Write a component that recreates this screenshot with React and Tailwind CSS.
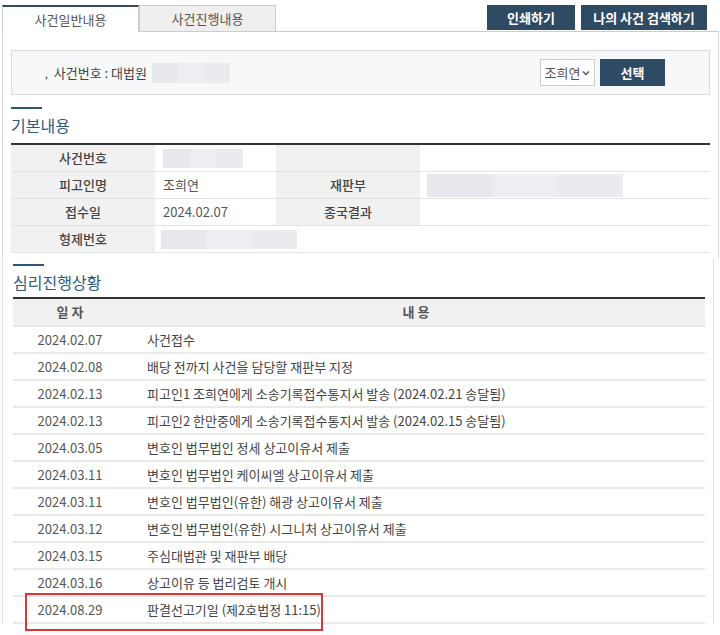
import React from 'react'

const font = { fontFamily: '"Noto Sans CJK KR", "Noto Sans", sans-serif' }

const rows = [
  ['2024.02.07', '사건접수'],
  ['2024.02.08', '배당 전까지 사건을 담당할 재판부 지정'],
  ['2024.02.13', '피고인1 조희연에게 소송기록접수통지서 발송 (2024.02.21 송달됨)'],
  ['2024.02.13', '피고인2 한만중에게 소송기록접수통지서 발송 (2024.02.15 송달됨)'],
  ['2024.03.05', '변호인 법무법인 정세 상고이유서 제출'],
  ['2024.03.11', '변호인 법무법인 케이씨엘 상고이유서 제출'],
  ['2024.03.11', '변호인 법무법인(유한) 해광 상고이유서 제출'],
  ['2024.03.12', '변호인 법무법인(유한) 시그니처 상고이유서 제출'],
  ['2024.03.15', '주심대법관 및 재판부 배당'],
  ['2024.03.16', '상고이유 등 법리검토 개시'],
]

function Blur({ className }) {
  return (
    <div className={'flex h-[19px] ' + className}>
      <div className="flex-1 bg-[#e6e8ec]" />
      <div className="flex-1 bg-[#eceef1]" />
      <div className="flex-1 bg-[#e9ebee]" />
    </div>
  )
}

function SectionTitle({ children }) {
  return (
    <div>
      <div className="w-[31px] h-[2px] bg-[#2f5578]" />
      <div className="text-[16px] leading-[20px] text-[#2e5a82] mt-[6px]">{children}</div>
    </div>
  )
}

export default function App() {
  return (
    <div className="w-[720px] h-[635px] overflow-hidden bg-white text-[13px] text-[#444]" style={font}>
      {/* top screenshot part */}
      <div className="pl-[2px] pr-[1px]">
        <div className="flex pt-[5px]">
          <div className="w-[137px] h-[27px] bg-white border-t-2 border-[#2f4a63] border-x border-x-[#ccc] flex items-center justify-center text-[#555]">
            사건일반내용
          </div>
          <div className="w-[137px] h-[27px] bg-[#efefef] border border-[#ccc] flex items-center justify-center text-[#555]">
            사건진행내용
          </div>
          <div className="flex-1 h-[27px] border-b border-[#ccc] flex justify-end gap-[6px] pr-[12px]">
            <div className="w-[88px] h-[25px] bg-[#2f4a63] text-white font-bold flex items-center justify-center">인쇄하기</div>
            <div className="w-[126px] h-[25px] bg-[#2f4a63] text-white font-bold flex items-center justify-center">나의 사건 검색하기</div>
          </div>
        </div>
        <div className="border-x border-[#d6d6d6] px-[8px] pt-[18px] h-[226px]">
          <div className="h-[45px] bg-[#f7f8fa] border border-[#dcdcdc] flex items-center pl-[33px] pr-[44px]">
            <span className="text-[10px] text-[#333] mr-[6px] mt-[2px]">,</span>
            <span className="text-[#444]">사건번호 : 대법원</span>
            <Blur className="w-[78px] ml-[5px] h-[20px]" />
            <div className="flex-1" />
            <div className="w-[55px] h-[27px] border border-[#ccc] bg-white flex items-center justify-center gap-[2px] text-[#555]">
              조희연
              <svg width="8" height="6" viewBox="0 0 8 6"><path d="M1 1.5 L4 4.5 L7 1.5" fill="none" stroke="#555" strokeWidth="1.4" /></svg>
            </div>
            <div className="w-[65px] h-[27px] ml-[5px] bg-[#2f4a63] text-white font-bold flex items-center justify-center">선택</div>
          </div>

          <div className="mt-[12px]">
            <SectionTitle>기본내용</SectionTitle>
          </div>
          <div className="mt-[8px] border-t-2 border-[#333]">
            <div className="grid grid-cols-[144px_121px_144px_1fr] h-[27px] border-b border-[#e3e3e3]">
              <div className="bg-[#f1f1f1] flex items-center justify-center font-medium text-[#444]">사건번호</div>
              <div className="flex items-center pl-[8px]"><Blur className="w-[80px]" /></div>
              <div className="bg-[#f1f1f1]" />
              <div />
            </div>
            <div className="grid grid-cols-[144px_121px_144px_1fr] h-[27px] border-b border-[#e3e3e3]">
              <div className="bg-[#f1f1f1] flex items-center justify-center font-medium">피고인명</div>
              <div className="flex items-center pl-[8px] text-[#555]">조희연</div>
              <div className="bg-[#f1f1f1] flex items-center justify-center font-medium">재판부</div>
              <div className="flex items-center pl-[7px]"><Blur className="w-[196px] h-[23px]" /></div>
            </div>
            <div className="grid grid-cols-[144px_121px_144px_1fr] h-[27px] border-b border-[#e3e3e3]">
              <div className="bg-[#f1f1f1] flex items-center justify-center font-medium">접수일</div>
              <div className="flex items-center pl-[8px] text-[#555]">2024.02.07</div>
              <div className="bg-[#f1f1f1] flex items-center justify-center font-medium">종국결과</div>
              <div />
            </div>
            <div className="grid grid-cols-[144px_1fr] h-[27px] border-b border-[#e3e3e3]">
              <div className="bg-[#f1f1f1] flex items-center justify-center font-medium">형제번호</div>
              <div className="flex items-center pl-[6px]"><Blur className="w-[136px] h-[18px]" /></div>
            </div>
          </div>
        </div>
      </div>

      {/* bottom screenshot part */}
      <div className="ml-[2px] w-[712px] border-x border-[#e0e0e0] pl-[10px] pr-[8px] pt-[6px]">
        <SectionTitle>심리진행상황</SectionTitle>
        <div className="mt-[5px] border-t-2 border-[#333]">
          <div className="grid grid-cols-[114px_1fr] h-[28px] bg-[#f1f1f1] border-b-2 border-[#e6e6e6] font-bold text-[#555]">
            <div className="flex items-center justify-center">일 자</div>
            <div className="flex items-center justify-center">내 용</div>
          </div>
          {rows.map(([d, t], i) => (
            <div key={i} className="grid grid-cols-[114px_1fr] h-[27px] border-b-2 border-[#e9e9e9]">
              <div className="flex items-center justify-center text-[#555]">{d}</div>
              <div className="flex items-center pl-[20px] text-[#444]">{t}</div>
            </div>
          ))}
          <div className="relative grid grid-cols-[114px_1fr] h-[27px] border-b-2 border-[#e9e9e9]">
            <div className="flex items-center justify-center text-[#555]">2024.08.29</div>
            <div className="flex items-center pl-[20px] text-[#444]">판결선고기일 (제2호법정 11:15)</div>
            <div className="absolute left-[12px] top-[-4px] w-[298px] h-[38px] border-2 border-[#d9383a]" />
          </div>
        </div>
      </div>
    </div>
  )
}
